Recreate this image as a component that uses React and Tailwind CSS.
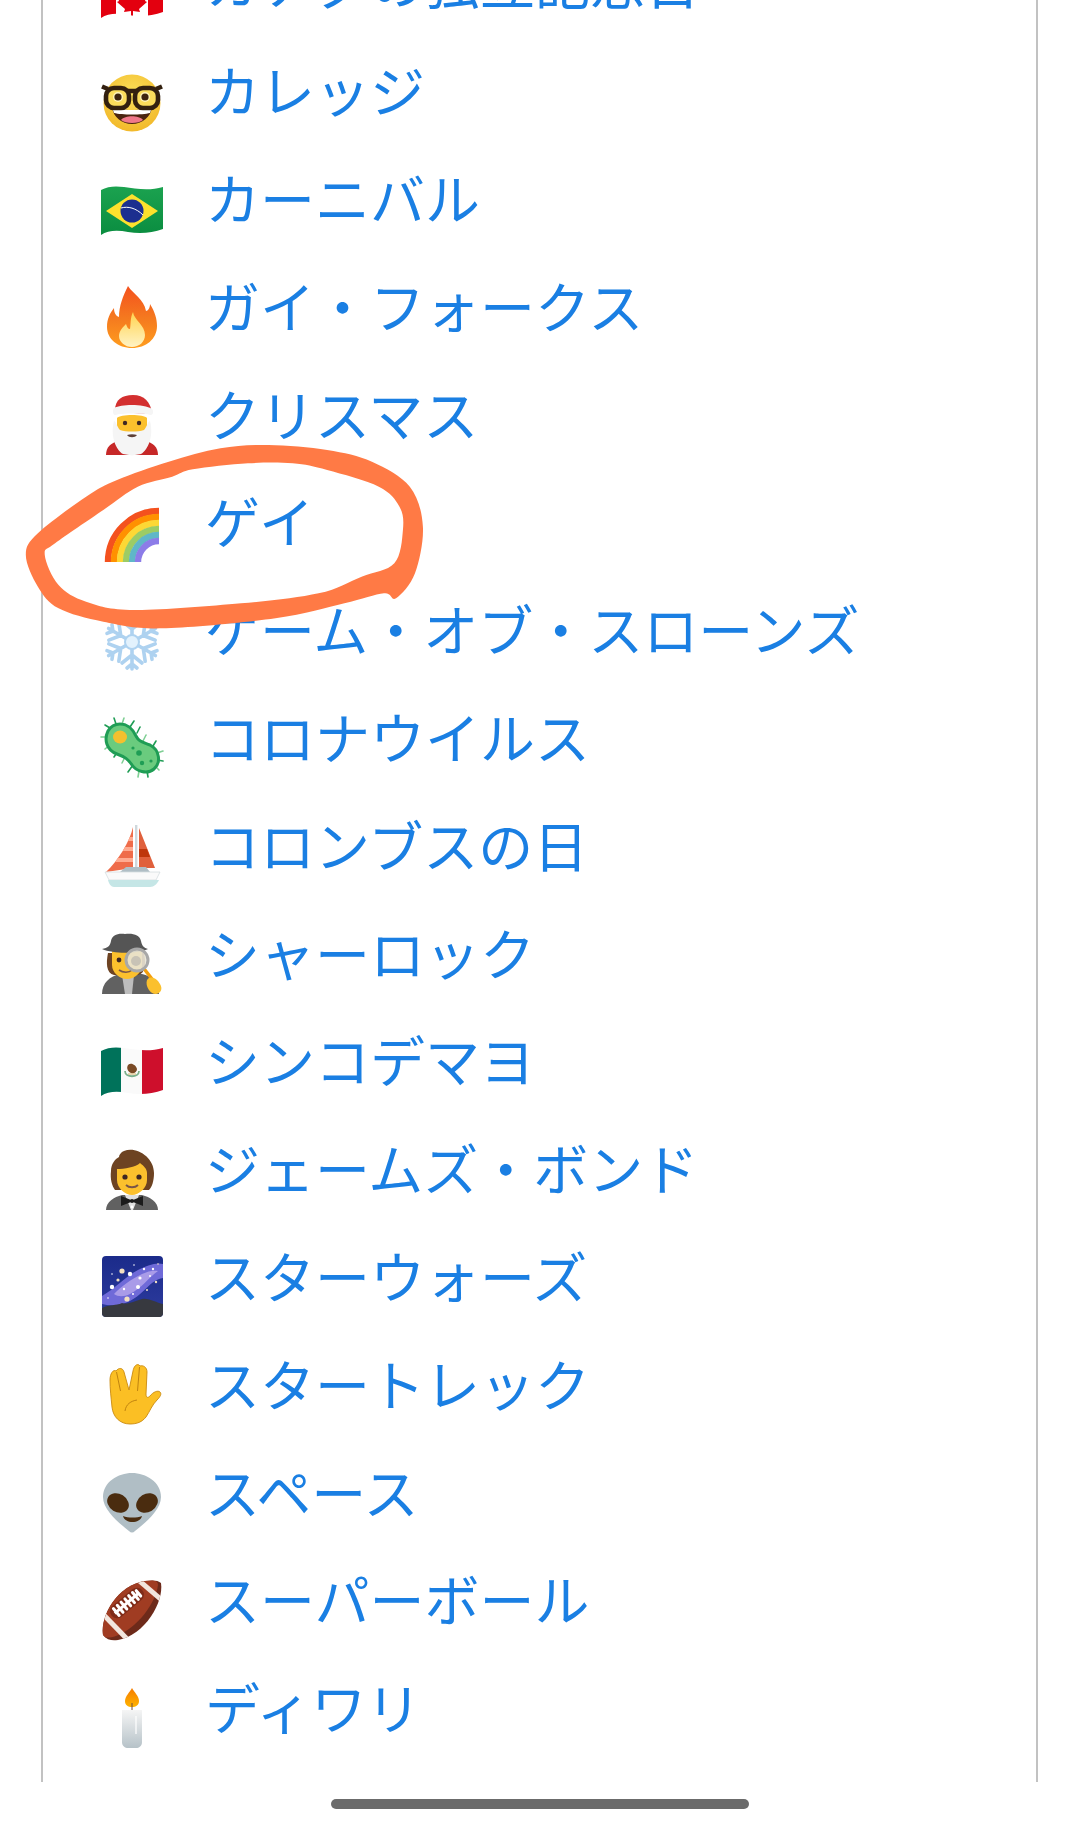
const ringOuter = [[75,375],[110,310],[250,200],[340,150],[490,95],[640,55],[780,45],[950,60],[1080,95],[1190,170],[1228,290],[1205,430],[1150,505],[1115,490],[1000,520],[800,565],[470,595],[300,575],[170,535],[110,470]];
const ringInner = [[130,375],[160,340],[300,240],[400,170],[500,140],[560,118],[720,100],[850,100],[950,120],[1100,170],[1160,230],[1170,300],[1145,400],[1050,440],[925,490],[700,520],[390,540],[250,515],[170,465]];

// closed catmull-rom curve through the points
function smooth(pts) {
  const n = pts.length;
  let d = `M${pts[0][0]} ${pts[0][1]}`;
  for (let i = 0; i < n; i++) {
    const p0 = pts[(i - 1 + n) % n];
    const p1 = pts[i];
    const p2 = pts[(i + 1) % n];
    const p3 = pts[(i + 2) % n];
    d += ` C${p1[0] + (p2[0] - p0[0]) / 6} ${p1[1] + (p2[1] - p0[1]) / 6} ${p2[0] - (p3[0] - p1[0]) / 6} ${p2[1] - (p3[1] - p1[1]) / 6} ${p2[0]} ${p2[1]}`;
  }
  return d + "Z";
}

const wave = "M1 10C8 6 16 6 24 7C36 9 50 11 63 7V49C52 53 40 54 28 52C18 50 8 50 1 55Z";

function Icon({ children }) {
  return (
    <svg viewBox="0 0 64 64" className="w-16 h-16 shrink-0 mt-[26px] overflow-visible">
      {children}
    </svg>
  );
}

function Canada() {
  return (
    <Icon>
      <clipPath id="ca"><path d={wave} /></clipPath>
      <g clipPath="url(#ca)">
        <rect width="64" height="64" fill="#fff" />
        <rect width="16" height="64" fill="#e3000f" />
        <rect x="48" width="16" height="64" fill="#e3000f" />
        <path d="M32 20l3 6 4-2-2 9 4-3 1 3 5-1-2 6 2 1-8 7 1 3-7-1v6h-2v-6l-7 1 1-3-8-7 2-1-2-6 5 1 1-3 4 3-2-9 4 2z" fill="#e3000f" />
      </g>
    </Icon>
  );
}

function Nerd() {
  return (
    <Icon>
      <radialGradient id="nerd" cx="50%" cy="35%" r="65%">
        <stop offset="0" stopColor="#fbe05a" />
        <stop offset="1" stopColor="#f2b92b" />
      </radialGradient>
      <circle cx="32" cy="32" r="28.5" fill="url(#nerd)" />
      <path d="M12 36C20 40 44 40 52 36C51 46 42 53 32 53C22 53 13 46 12 36Z" fill="#4a2410" />
      <path d="M12 36C20 40 44 40 52 36L50 42C42 44 22 44 14 42Z" fill="#fff" />
      <path d="M21 49C25 44 39 44 43 49C39 53 25 53 21 49Z" fill="#f0788a" />
      <rect x="6" y="17" width="23" height="20" rx="8" fill="#fbdc5c" stroke="#33200f" strokeWidth="4.6" />
      <rect x="35" y="17" width="23" height="20" rx="8" fill="#fbdc5c" stroke="#33200f" strokeWidth="4.6" />
      <path d="M2 15.5L8 18M62 15.5L56 18M28 20H36" stroke="#33200f" strokeWidth="4.6" />
      <circle cx="18" cy="26" r="5" fill="#fff3b8" />
      <circle cx="45" cy="26" r="5" fill="#fff3b8" />
      <circle cx="18" cy="26" r="3.6" fill="#3e2410" />
      <circle cx="45" cy="26" r="3.6" fill="#3e2410" />
    </Icon>
  );
}

function Brazil() {
  return (
    <Icon>
      <clipPath id="br"><path d={wave} transform="translate(0 2)" /></clipPath>
      <linearGradient id="brg" x1="0" x2="0" y1="0" y2="1">
        <stop offset="0" stopColor="#1ea652" />
        <stop offset="1" stopColor="#088a3e" />
      </linearGradient>
      <g clipPath="url(#br)">
        <rect width="64" height="64" fill="url(#brg)" />
        <path d="M32 16L58 33L32 50L6 33Z" fill="#fde12d" />
        <circle cx="32" cy="33" r="11.5" fill="#1c2f8f" />
        <path d="M21 30C28 28 36 30 43 37" stroke="#fff" strokeWidth="1" fill="none" />
      </g>
    </Icon>
  );
}

function Fire() {
  return (
    <Icon>
      <linearGradient id="fire" x1="0" x2="0" y1="0" y2="1">
        <stop offset="0" stopColor="#f4511e" />
        <stop offset="0.55" stopColor="#f57c1f" />
        <stop offset="1" stopColor="#ff9d1e" />
      </linearGradient>
      <linearGradient id="fire2" x1="0" x2="0" y1="0" y2="1">
        <stop offset="0" stopColor="#ffd34f" />
        <stop offset="1" stopColor="#fff3c4" />
      </linearGradient>
      <path d="M28 0C33 8 44 13 46 25C48 25 50 22 50 18C55 26 57 33 57 40C57 53 46 62 32 62C18 62 7 53 7 41C7 33 10 27 14 22C14 27 16 30 19 31C19 20 23 10 28 0Z" fill="url(#fire)" />
      <path d="M33 26C34 34 45 39 45 49C45 56 39 61 32 61C25 61 19 56 19 50C19 45 23 41 26 38C27 41 28 43 30 43C31 38 30 32 33 26Z" fill="url(#fire2)" />
    </Icon>
  );
}

function Santa() {
  return (
    <Icon>
      <path d="M6 61C6 53 11 49 18 47H46C53 49 58 53 58 61Z" fill="#c62828" />
      <path d="M15 16C15 6 22 1 33 1C44 1 51 8 52 20L15 18Z" fill="#d32f2f" />
      <path d="M17 24C20 20 44 20 47 24V38H17Z" fill="#fbc02d" />
      <path d="M14 27C16 27 17 33 20 36C26 38 38 38 44 36C47 33 48 27 50 27C54 42 48 56 41 60L32 61.5L23 60C16 56 10 42 14 27Z" fill="#f5f5f5" />
      <path d="M25 40C29 38 35 38 39 40C37 44 27 44 25 40Z" fill="#fafafa" />
      <path d="M27 41C30 40 34 40 37 41C35 44 29 44 27 41Z" fill="#5d4037" />
      <path d="M14 14C22 10 44 10 52 15C54 17 53 21 51 21C44 19 22 19 15 21C13 21 12 16 14 14Z" fill="#f5f5f5" />
      <circle cx="25" cy="29" r="2.2" fill="#3e2723" />
      <circle cx="39" cy="29" r="2.2" fill="#3e2723" />
    </Icon>
  );
}

function Rainbow() {
  const bands = [
    ["#f4511e", 51],
    ["#ff9100", 45],
    ["#fdd835", 39],
    ["#9ccc65", 33],
    ["#5fb7c8", 27],
    ["#8c7ce8", 21],
  ];
  return (
    <Icon>
      {bands.map(([color, r]) => (
        <path key={r} d={`M59 ${60 - r}A${r} ${r} 0 0 0 ${59 - r} 60`} stroke={color} strokeWidth="6.4" fill="none" />
      ))}
    </Icon>
  );
}

function Snowflake() {
  return (
    <Icon>
      {[0, 60, 120, 180, 240, 300].map((a) => (
        <g key={a} transform={`rotate(${a} 32 32)`}>
          <path d="M32 32V5M32 19L22 11M32 19L42 11M32 10L27 6M32 10L37 6" stroke="#aed2f0" strokeWidth="3.6" strokeLinecap="round" fill="none" />
        </g>
      ))}
      <circle cx="32" cy="32" r="7" fill="#e3f2fd" stroke="#aed2f0" strokeWidth="2" />
    </Icon>
  );
}

function Microbe() {
  const spikes = [
    [14, 1, 16, 7], [24, 1, 22, 7], [5, 8, 10, 11], [1, 20, 7, 20], [34, 4, 30, 10], [5, 32, 11, 27], [14, 40, 18, 34],
    [22, 46, 25, 40], [28, 55, 33, 48], [38, 60, 39, 54], [48, 60, 47, 54], [59, 53, 55, 49], [63, 44, 57, 43],
    [63, 34, 57, 36], [56, 24, 53, 29], [46, 18, 43, 24], [40, 10, 37, 16],
  ];
  return (
    <Icon>
      {spikes.map((s, i) => (
        <line key={i} x1={s[0]} y1={s[1]} x2={s[2]} y2={s[3]} stroke={i % 2 ? "#7fcf94" : "#1f9d55"} strokeWidth="1.6" strokeLinecap="round" />
      ))}
      <path d="M20 7C29 7 33 13 36 19C39 25 43 25 50 28C60 33 61 46 54 52C47 58 36 54 32 48C28 42 25 40 17 37C6 33 4 22 8 14C11 9 15 7 20 7Z" fill="#6acb7e" stroke="#1f9d55" strokeWidth="3" />
      <ellipse cx="20" cy="20" rx="7" ry="6.5" fill="#f5c02e" />
      <circle cx="33" cy="31" r="1.6" fill="#1f9d55" />
      <circle cx="39" cy="36" r="2.8" fill="#1f9d55" />
      <circle cx="42" cy="46" r="2.2" fill="#1f9d55" />
      <circle cx="51" cy="44" r="1.6" fill="#1f9d55" />
    </Icon>
  );
}

function Sailboat() {
  return (
    <Icon>
      <clipPath id="sail"><path d="M33 2C30 16 18 36 6 47L33 43Z" /></clipPath>
      <path d="M33 2C30 16 18 36 6 47L33 43Z" fill="#ef6c4a" />
      <g clipPath="url(#sail)" fill="#ffab91">
        <rect x="0" y="12" width="40" height="4" />
        <rect x="0" y="22" width="40" height="4" />
        <rect x="0" y="33" width="40" height="4" />
      </g>
      <path d="M39 3L55 43H39Z" fill="#e0603c" />
      <path d="M39 24H47L50 32H39Z" fill="#bf360c" />
      <rect x="35" y="0" width="2.4" height="46" fill="#cfd8dc" />
      <path d="M20 47L26 42H46L50 47Z" fill="#b0bec5" />
      <path d="M5 47H60L56 55H9Z" fill="#fafafa" stroke="#d5dde0" strokeWidth="0.8" />
      <path d="M8 55H59C57 59 54 62 50 62H14C11 62 9 59 8 55Z" fill="#c5e6e6" />
    </Icon>
  );
}

function Detective() {
  return (
    <Icon>
      <path d="M2 61C2 50 10 43 20 41H42C52 43 59 50 59 61Z" fill="#616161" />
      <path d="M22 42H34L32 61H25Z" fill="#bdbdbd" />
      <path d="M8 20H44C46 30 46 40 38 42H14C6 40 6 30 8 20Z" fill="#6d4322" />
      <path d="M12 16H42V32C42 40 34 46 27 46C20 46 12 40 12 32Z" fill="#fbc02d" />
      <circle cx="19" cy="27" r="2.4" fill="#3e2723" />
      <path d="M19 37C23 40 29 40 32 37" stroke="#795548" strokeWidth="1.6" fill="none" />
      <path d="M2 16C8 15 10 13 11 8C12 2 18 0 25 1C33 0 40 2 41 8C42 13 44 15 48 16C36 21 14 21 2 16Z" fill="#555" />
      <line x1="45" y1="37" x2="52" y2="46" stroke="#f59e0b" strokeWidth="3.4" strokeLinecap="round" />
      <circle cx="37" cy="27" r="11" fill="#e8e4d6" fillOpacity="0.9" stroke="#a8a8a8" strokeWidth="3" />
      <circle cx="36" cy="28" r="5" fill="#c8c3b6" />
      <path d="M47 47C50 42 57 45 60 51C63 56 61 60 56 61C50 61 45 53 47 47Z" fill="#fbc02d" />
    </Icon>
  );
}

function Mexico() {
  return (
    <Icon>
      <clipPath id="mx"><path d={wave} /></clipPath>
      <g clipPath="url(#mx)">
        <rect width="64" height="64" fill="#fafafa" />
        <rect width="21" height="64" fill="#00725a" />
        <rect x="42" width="22" height="64" fill="#ce0f2c" />
        <path d="M25 30C25 37 39 37 39 30" fill="none" stroke="#7cb08c" strokeWidth="1.8" />
        <path d="M28 24C31 21 36 24 37 28C37 31 34 33 31 32C28 31 26 27 28 24Z" fill="#7a4a26" />
        <path d="M28 33H36" stroke="#d6b36a" strokeWidth="1.2" />
      </g>
    </Icon>
  );
}

function Tux() {
  return (
    <Icon>
      <path d="M6 61C6 53 14 48 22 46H42C50 48 58 53 58 61Z" fill="#616161" />
      <path d="M25 46H39L33 61H31Z" fill="#e0e0e0" />
      <path d="M24 2C36 -3 54 8 54 24C54 32 52 38 49 41H15C12 37 10 30 11 22C11 15 15 10 19 8C19 6 21 3 24 2Z" fill="#6d4322" />
      <path d="M17 20C24 20 36 18 40 14C44 17 47 20 47 24V31C47 39 39 46 32 46C25 46 17 39 17 31Z" fill="#fbc02d" />
      <circle cx="25" cy="28" r="2.6" fill="#3e2723" />
      <circle cx="39" cy="28" r="2.6" fill="#3e2723" />
      <path d="M26 36C29 39 35 39 38 36" stroke="#795548" strokeWidth="1.8" fill="none" />
      <path d="M21 47L31 51V53L21 57ZM43 47L33 51V53L43 57Z" fill="#1b1b1b" />
      <circle cx="32" cy="52" r="2" fill="#1b1b1b" />
      <circle cx="32" cy="58" r="1.4" fill="#fff" />
    </Icon>
  );
}

function MilkyWay() {
  const stars = [[22, 15, 2.6], [30, 18, 2.2], [12, 31, 2.2], [27, 43, 2.6], [38, 31, 2], [40, 22, 1.6], [18, 24, 1.6], [44, 13, 1.2], [53, 13, 1.2], [56, 26, 1.2], [34, 9, 0.8], [24, 33, 1.2], [47, 34, 1], [33, 38, 1], [12, 18, 0.8], [58, 8, 0.8], [8, 42, 0.8], [50, 20, 1]];
  return (
    <Icon>
      <linearGradient id="sky" x1="0" x2="0" y1="0" y2="1">
        <stop offset="0" stopColor="#1b2b8a" />
        <stop offset="1" stopColor="#2d3b9e" />
      </linearGradient>
      <clipPath id="mw"><rect x="2" y="0" width="61" height="61" rx="4" /></clipPath>
      <g clipPath="url(#mw)">
        <rect x="2" y="0" width="61" height="61" fill="url(#sky)" />
        <path d="M2 40C16 32 26 20 38 14C46 10 56 6 63 8V22C50 24 44 38 30 45C20 50 10 50 2 48Z" fill="#6f6ad8" />
        <path d="M14 38C22 30 30 24 42 18C48 15 54 14 58 15C48 22 42 32 30 38C24 41 18 41 14 38Z" fill="#a99be8" />
        {stars.map((s, i) => (
          <circle key={i} cx={s[0]} cy={s[1]} r={s[2]} fill={i % 3 == 0 ? "#f3e0c0" : "#fff"} />
        ))}
        <path d="M2 52C10 48 16 50 22 47C28 49 34 45 42 43C50 42 56 47 63 48V61H2Z" fill="#37393f" />
      </g>
    </Icon>
  );
}

function Vulcan() {
  return (
    <Icon>
      <g transform="translate(0 1)">
        <path d="M10 15C10 9 13 4 16 6C19 2 23 3 24 7L29 25L33 6C34 0 38 -2 40 1C43 0 47 2 47 7L46 29C46 33 48 33 50 31C53 27 58 25 60 27C62 29 60 32 57 35C52 40 50 46 46 52C42 57 37 59 30 59C20 59 13 52 12 42C11 32 10 24 10 15Z" fill="#fbbf24" stroke="#c98a10" strokeWidth="0.9" />
        <path d="M16.5 7L20.5 26M39.5 2L37.5 26M25 46C26 39 31 36 37 35" stroke="#b97c0c" strokeWidth="0.9" fill="none" />
      </g>
    </Icon>
  );
}

function Alien() {
  return (
    <Icon>
      <g transform="translate(0 1)">
        <path d="M32 0C46 0 61 9 61 24C61 37 45 50 35 58C33 60 31 60 29 58C19 50 3 37 3 24C3 9 18 0 32 0Z" fill="#b0bec5" />
        <ellipse cx="18" cy="30" rx="11.5" ry="9" transform="rotate(32 18 30)" fill="#4a2c0f" />
        <ellipse cx="47" cy="30" rx="11.5" ry="9" transform="rotate(-32 47 30)" fill="#4a2c0f" />
        <path d="M23 43C28 45 37 45 42 43C40 51 25 51 23 43Z" fill="#4a2c0f" />
      </g>
    </Icon>
  );
}

function Football() {
  return (
    <Icon>
      <clipPath id="ball"><path d="M3 55C0 35 18 5 45 1C52 0 58 0 61 3C64 22 45 55 18 60C12 61 7 60 3 55Z" /></clipPath>
      <path d="M3 55C0 35 18 5 45 1C52 0 58 0 61 3C64 22 45 55 18 60C12 61 7 60 3 55Z" fill="#6d2a1a" />
      <g clipPath="url(#ball)">
        <path d="M2 56C0 35 18 4 45 0C52 -1 58 0 58 5C56 22 38 48 16 56C10 58 5 58 2 56Z" fill="#a03c22" />
        <path d="M0 31L28 60" stroke="#f2e6de" strokeWidth="5" />
        <path d="M36 -2L64 22" stroke="#f2e6de" strokeWidth="5" />
      </g>
      <g transform="rotate(-40 27 23)">
        <rect x="7" y="16" width="40" height="14" rx="7" fill="#7f2b18" />
        <path d="M11 23H43" stroke="#fff" strokeWidth="3" />
        <path d="M13 18.5V27.5M18 18.5V27.5M23 18.5V27.5M28 18.5V27.5M33 18.5V27.5M38 18.5V27.5M42 19.5V26.5" stroke="#fff" strokeWidth="3" strokeLinecap="round" />
      </g>
    </Icon>
  );
}

function Candle() {
  return (
    <Icon>
      <linearGradient id="wax" x1="0" x2="0" y1="0" y2="1">
        <stop offset="0" stopColor="#f5f5f5" />
        <stop offset="1" stopColor="#b6c2c8" />
      </linearGradient>
      <linearGradient id="flame" x1="0" x2="0" y1="0" y2="1">
        <stop offset="0" stopColor="#f57c00" />
        <stop offset="1" stopColor="#ffb300" />
      </linearGradient>
      <path d="M32 0C34 4 39 8 39 13C39 17 36 19 32 19C28 19 25 17 25 13C25 8 30 4 32 0Z" fill="url(#flame)" />
      <line x1="32" y1="15" x2="32" y2="23" stroke="#6d4c41" strokeWidth="1" />
      <path d="M22 22H42V54C42 58 39 60 36 60H28C25 60 22 58 22 54Z" fill="url(#wax)" />
      <line x1="36" y1="28" x2="36" y2="46" stroke="#fff" strokeWidth="1.2" />
    </Icon>
  );
}

const rows = [
  [Canada, "カナダの独立記念日"],
  [Nerd, "カレッジ"],
  [Brazil, "カーニバル"],
  [Fire, "ガイ・フォークス"],
  [Santa, "クリスマス"],
  [Rainbow, "ゲイ"],
  [Snowflake, "ゲーム・オブ・スローンズ"],
  [Microbe, "コロナウイルス"],
  [Sailboat, "コロンブスの日"],
  [Detective, "シャーロック"],
  [Mexico, "シンコデマヨ"],
  [Tux, "ジェームズ・ボンド"],
  [MilkyWay, "スターウォーズ"],
  [Vulcan, "スタートレック"],
  [Alien, "スペース"],
  [Football, "スーパーボール"],
  [Candle, "ディワリ"],
];

export default function App() {
  return (
    <div className="relative h-[1826px] w-[1080px] bg-white overflow-hidden font-['Noto_Sans_CJK_JP','Noto_Sans',sans-serif]">
      <div className="ml-[41px] w-[997px] h-[1782px] border-x-2 border-[#c2c2c2] overflow-hidden">
        <ul className="-mt-[72px] pl-[57px]">
          {rows.map(([Emoji, label]) => (
            <li key={label} className="h-[107.8px] flex items-center gap-[41px]">
              <Emoji />
              <a className="text-[55px] leading-none text-[#1a7fe3] whitespace-nowrap mb-[2px]">{label}</a>
            </li>
          ))}
        </ul>
      </div>

      <div className="mt-[17px] mx-auto w-[418px] h-[10px] rounded-full bg-[#6b6b6b]" />

      {/* hand drawn circle around the row */}
      <svg viewBox="0 0 1568 1380" preserveAspectRatio="none" className="absolute left-0 top-[430px] w-[540px] h-[460px] pointer-events-none">
        <path d={smooth(ringOuter) + smooth(ringInner)} fillRule="evenodd" fill="#ff7a45" />
      </svg>
    </div>
  );
}
